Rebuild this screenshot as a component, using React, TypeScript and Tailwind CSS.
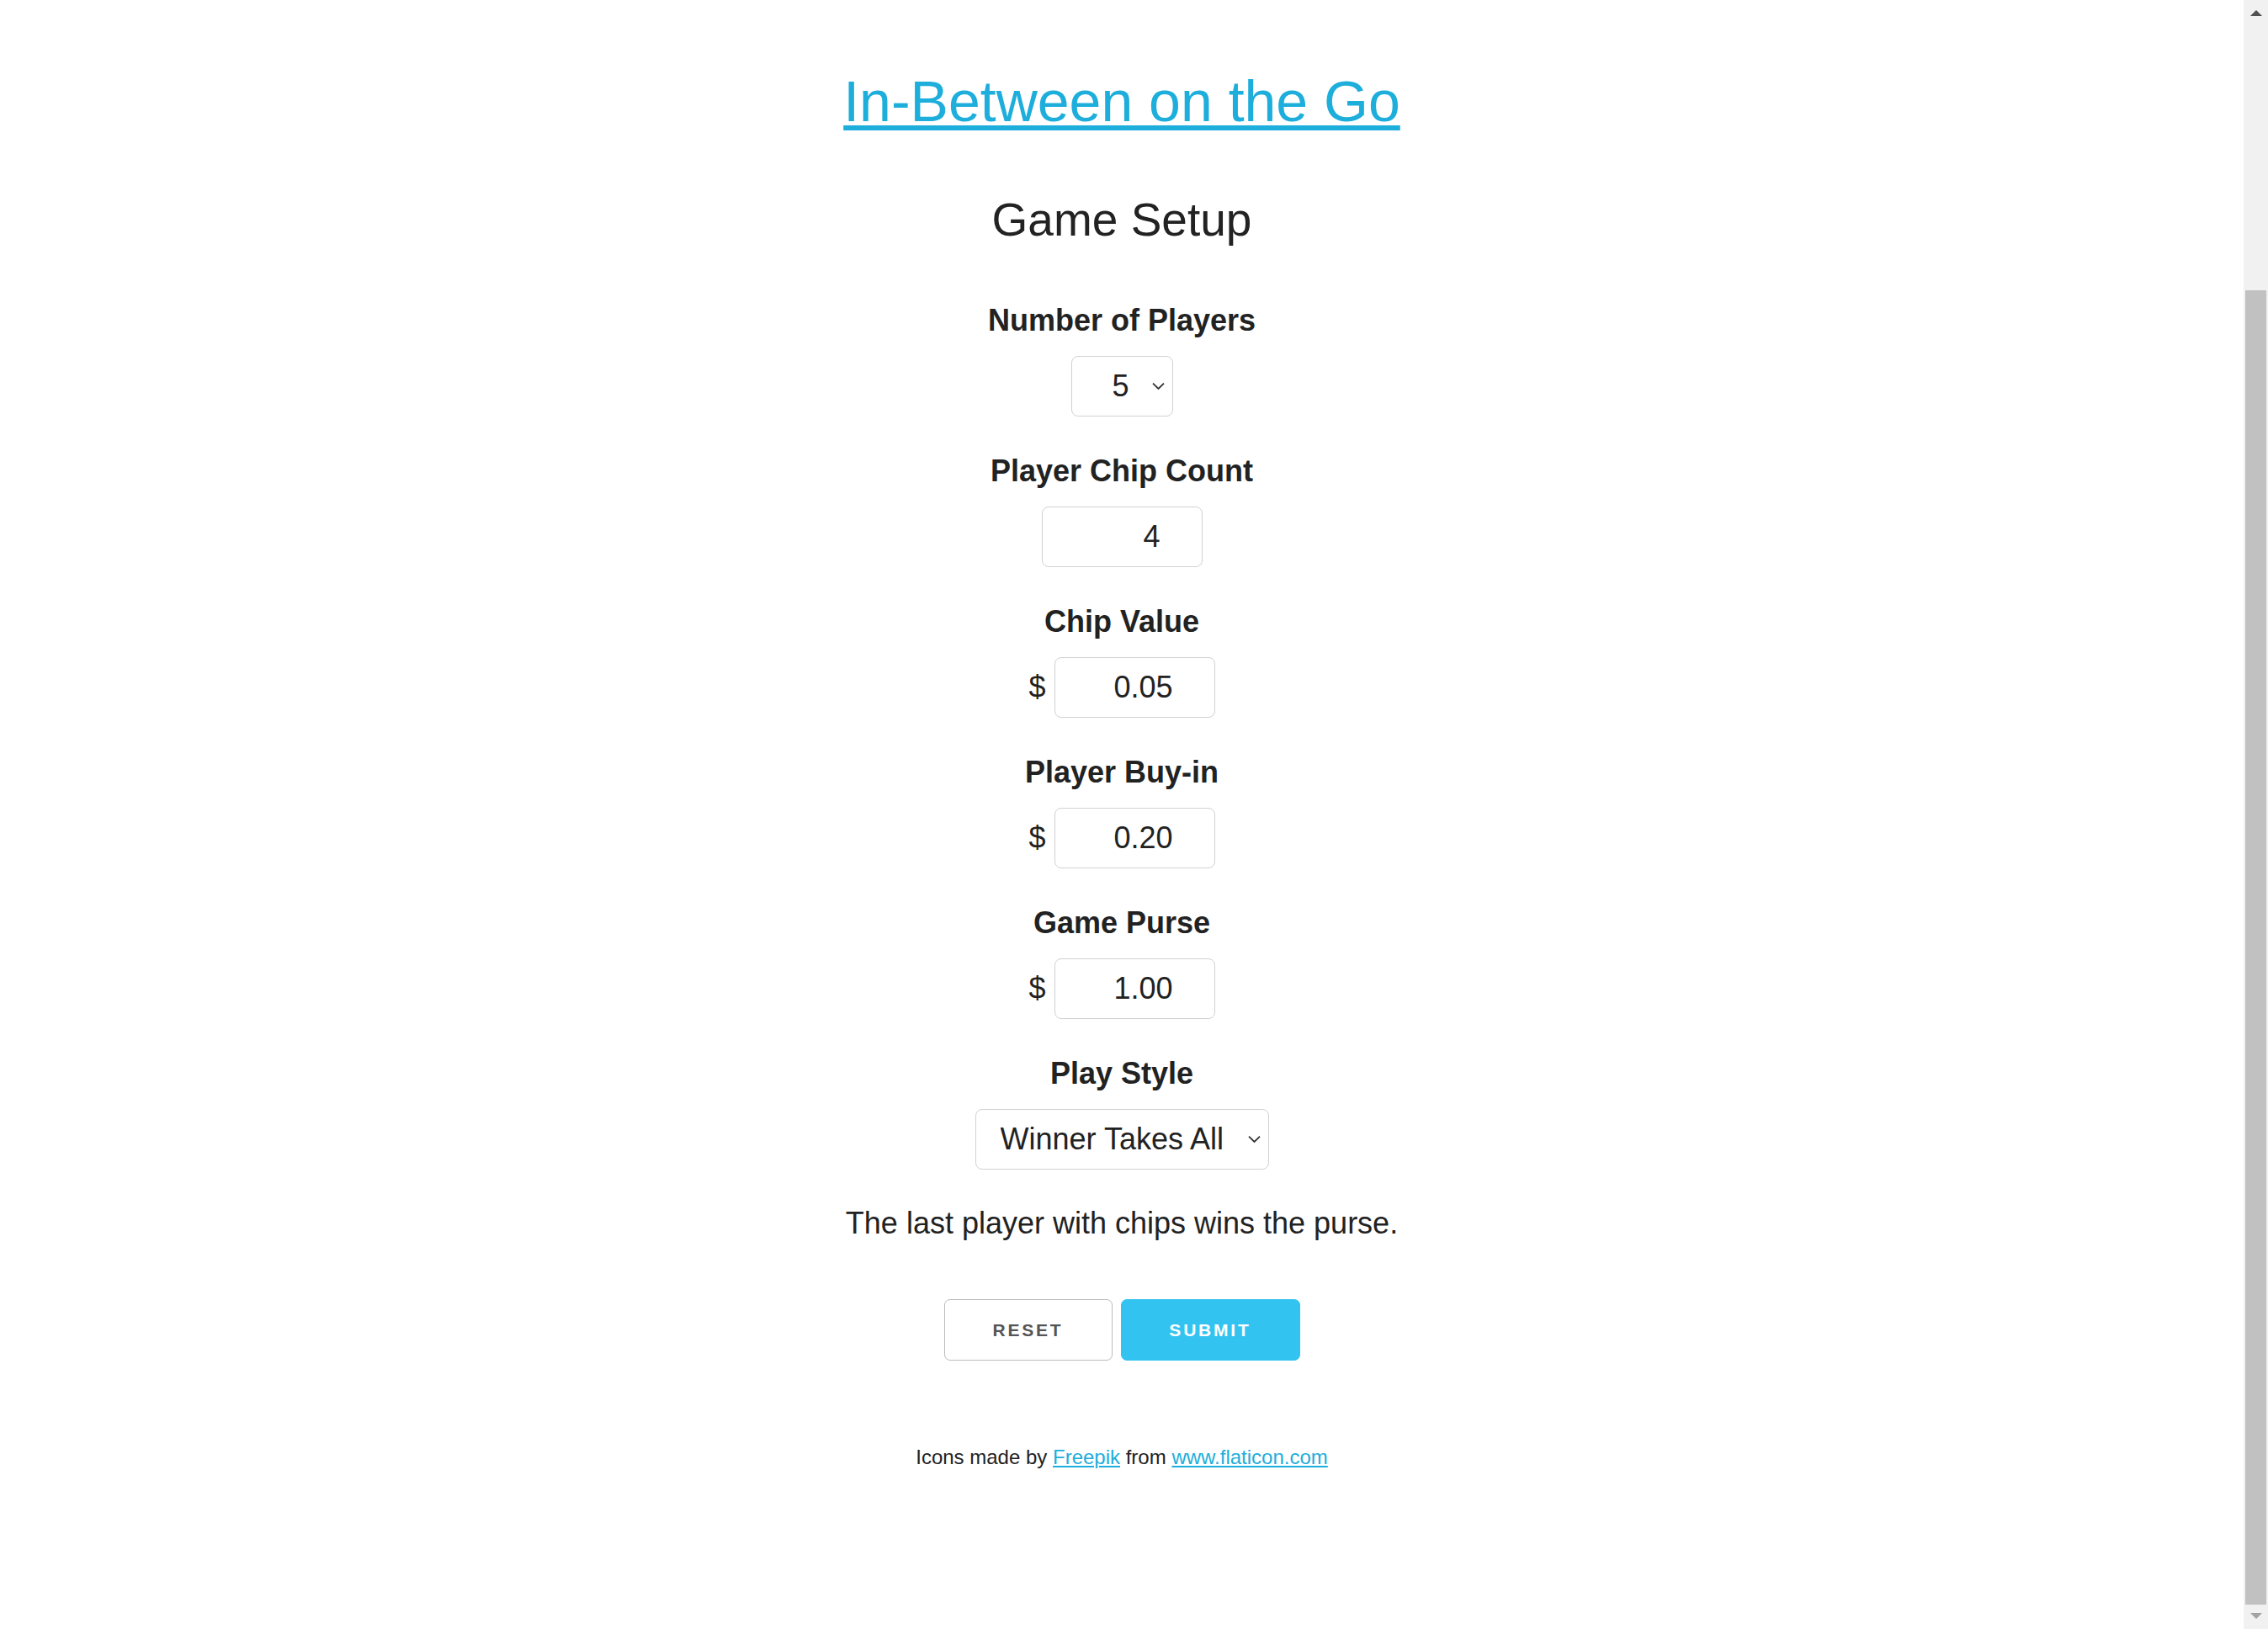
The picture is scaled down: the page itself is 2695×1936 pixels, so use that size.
import React from "react";

const Chevron = () => (
  <svg
    width="15"
    height="9"
    viewBox="0 0 15 9"
    className="pointer-events-none absolute right-[10px] top-1/2 -translate-y-1/2"
  >
    <path d="M1 1.2l6.5 6.3L14 1.2" fill="none" stroke="#333" strokeWidth="1.8" />
  </svg>
);

const Label = ({ children }: { children: React.ReactNode }) => (
  <label className="mb-[24px] block text-[36px] font-bold leading-[36px] text-[#222]">
    {children}
  </label>
);

const MoneyInput = ({ value }: { value: string }) => (
  <div className="flex items-center gap-[10px]">
    <span className="text-[36px] leading-[36px] text-[#222]">$</span>
    <input
      type="text"
      defaultValue={value}
      className="h-[72px] w-[191px] rounded-[8px] border border-[#d1d1d1] bg-white pr-[49px] text-right text-[36px] text-[#222] outline-none"
    />
  </div>
);

const App = () => {
  return (
    <div className="flex h-screen w-full overflow-hidden bg-white [font-family:'Liberation_Sans',Arial,sans-serif]">
      <div className="flex flex-1 flex-col items-center pt-[86px] text-[#222]">
        <h1 className="text-[68px] leading-[68px]">
          <a
            href="#"
            className="text-[#1eaedb] underline decoration-[6px] underline-offset-[5px]"
          >
            In-Between on the Go
          </a>
        </h1>

        <h2 className="mt-[80px] text-[55px] leading-[55px]">Game Setup</h2>

        <div className="mt-[74px] flex flex-col items-center">
          <Label>Number of Players</Label>
          <div className="relative">
            <select
              defaultValue="5"
              className="h-[72px] w-[121px] appearance-none rounded-[8px] border border-[#d1d1d1] bg-white pl-[48px] text-[36px] text-[#222] outline-none"
            >
              <option value="2">2</option>
              <option value="3">3</option>
              <option value="4">4</option>
              <option value="5">5</option>
              <option value="6">6</option>
            </select>
            <Chevron />
          </div>
        </div>

        <div className="mt-[47px] flex flex-col items-center">
          <Label>Player Chip Count</Label>
          <input
            type="text"
            defaultValue="4"
            className="h-[72px] w-[191px] rounded-[8px] border border-[#d1d1d1] bg-white pr-[49px] text-right text-[36px] text-[#222] outline-none"
          />
        </div>

        <div className="mt-[47px] flex flex-col items-center">
          <Label>Chip Value</Label>
          <MoneyInput value="0.05" />
        </div>

        <div className="mt-[47px] flex flex-col items-center">
          <Label>Player Buy-in</Label>
          <MoneyInput value="0.20" />
        </div>

        <div className="mt-[47px] flex flex-col items-center">
          <Label>Game Purse</Label>
          <MoneyInput value="1.00" />
        </div>

        <div className="mt-[47px] flex flex-col items-center">
          <Label>Play Style</Label>
          <div className="relative">
            <select
              defaultValue="wta"
              className="h-[72px] w-[349px] appearance-none rounded-[8px] border border-[#d1d1d1] bg-white pl-[29px] text-[36px] text-[#222] outline-none"
            >
              <option value="wta">Winner Takes All</option>
              <option value="split">Split Purse</option>
            </select>
            <Chevron />
          </div>
        </div>

        <p className="mt-[46px] text-[36px] leading-[36px]">
          The last player with chips wins the purse.
        </p>

        <div className="mt-[72px] flex gap-[10px]">
          <button className="h-[73px] w-[200px] rounded-[7px] border border-[#bbb] bg-white text-[21px] font-bold uppercase tracking-[2.8px] text-[#555]">
            Reset
          </button>
          <button className="h-[73px] w-[213px] rounded-[7px] border border-[#33c3f0] bg-[#33c3f0] text-[21px] font-bold uppercase tracking-[2.8px] text-white">
            Submit
          </button>
        </div>

        <p className="mt-[103px] text-[24px] leading-[24px]">
          Icons made by{" "}
          <a href="#" className="text-[#1eaedb] underline">
            Freepik
          </a>{" "}
          from{" "}
          <a href="#" className="text-[#1eaedb] underline">
            www.flaticon.com
          </a>
        </p>
      </div>

      {/* scrollbar as it appears in the screenshot */}
      <div className="flex w-[29px] flex-col bg-[#f1f1f1]">
        <div className="flex h-[29px] items-start justify-center pt-[12px]">
          <div className="h-0 w-0 border-x-[7px] border-b-[7px] border-x-transparent border-b-[#505050]" />
        </div>
        <div className="flex flex-1 flex-col justify-end px-[2px]">
          <div className="h-[1562px] bg-[#c1c1c1]" />
        </div>
        <div className="flex h-[29px] items-start justify-center pt-[10px]">
          <div className="h-0 w-0 border-x-[7px] border-t-[7px] border-x-transparent border-t-[#a3a3a3]" />
        </div>
      </div>
    </div>
  );
};

export default App;
